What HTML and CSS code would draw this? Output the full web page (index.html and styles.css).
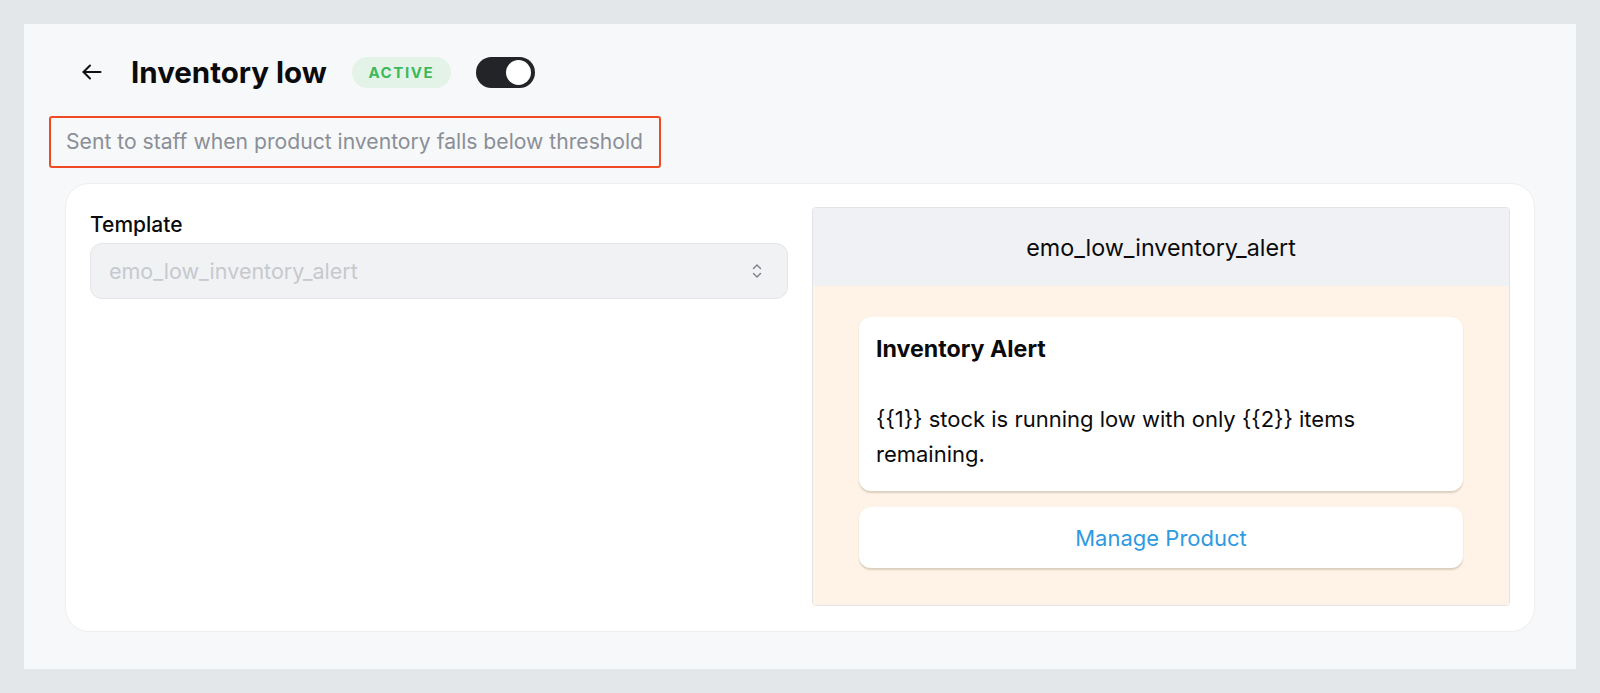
FILE: index.html
```html
<!DOCTYPE html>
<html lang="en">
<head>
<meta charset="utf-8">
<title>Inventory low</title>
<link rel="stylesheet" href="styles.css">
</head>
<body>
<div class="frame">
  <header class="header">
    <button class="back" aria-label="Back">
      <svg width="24" height="24" viewBox="0 0 24 24" fill="none" stroke="#111" stroke-width="2" stroke-linecap="round" stroke-linejoin="round"><path d="M20.5 12H3.5"/><path d="M10 5.5L3.5 12l6.5 6.5"/></svg>
    </button>
    <h1 class="title">Inventory low</h1>
    <span class="badge">ACTIVE</span>
    <span class="toggle"><span class="knob"></span></span>
  </header>
  <div class="subtitle-box">
    <p class="subtitle">Sent to staff when product inventory falls below threshold</p>
  </div>
  <main class="card">
    <section class="col-left">
      <label class="label">Template</label>
      <div class="select">
        <span class="select-text">emo_low_inventory_alert</span>
        <svg class="chev" width="12" height="18" viewBox="0 0 12 18" fill="none" stroke="#7b8088" stroke-width="1.4" stroke-linecap="round" stroke-linejoin="round"><path d="M2.5 6.5L6 3l3.5 3.5"/><path d="M2.5 11.5L6 15l3.5-3.5"/></svg>
      </div>
    </section>
    <section class="preview">
      <div class="preview-head">emo_low_inventory_alert</div>
      <div class="preview-body">
        <div class="bubble">
          <div class="bubble-title">Inventory Alert</div>
          <div class="bubble-text">{{1}} stock is running low with only {{2}} items remaining.</div>
        </div>
        <div class="action">Manage Product</div>
      </div>
    </section>
  </main>
</div>
</body>
</html>
```

FILE: styles.css
```css
* { box-sizing: border-box; }
html, body { margin: 0; padding: 0; }
body {
  background: #e4e7ea;
  padding: 24px;
  font-family: Inter, "Noto Sans", "Liberation Sans", sans-serif;
  color: #0b0b0c;
}
.frame {
  background: #f7f8fa;
  height: 645px;
  padding: 20px 41px 0 41px;
}
.header {
  display: flex;
  align-items: center;
  height: 56px;
}
.back {
  width: 24px;
  height: 24px;
  padding: 0;
  margin-left: 15px;
  border: 0;
  background: transparent;
  display: flex;
  align-items: center;
  justify-content: center;
}
.title {
  margin: 0 0 0 27px;
  font-size: 29.5px;
  font-weight: 700;
  letter-spacing: 0;
  line-height: 36px;
}
.badge {
  margin-left: 25px;
  height: 31px;
  width: 99px;
  border-radius: 16px;
  background: #e4f3e7;
  color: #3cba5b;
  font-size: 15px;
  font-weight: 700;
  letter-spacing: 1.6px;
  display: flex;
  align-items: center;
  justify-content: center;
}
.toggle {
  margin-left: 25px;
  width: 59px;
  height: 31px;
  border-radius: 16px;
  background: #222428;
  position: relative;
  display: block;
}
.knob {
  position: absolute;
  right: 4px;
  top: 3px;
  width: 25px;
  height: 25px;
  border-radius: 50%;
  background: #fff;
}
.subtitle-box {
  margin: 16px 0 0 -16px;
  width: 612px;
  height: 52px;
  border: 2px solid #f04a24;
  border-radius: 3px;
  padding: 0 0 0 15px;
  display: flex;
  align-items: center;
}
.subtitle {
  margin: 0;
  font-size: 21.15px;
  line-height: 28px;
  color: #8a8f97;
  white-space: nowrap;
}
.card {
  margin-top: 15px;
  height: 449px;
  background: #fff;
  border: 1px solid #eceef1;
  border-radius: 24px;
  padding: 23px 24px;
  display: grid;
  grid-template-columns: 1fr 1fr;
  gap: 24px;
}
.col-left {
  padding-top: 5px;
}
.label {
  display: block;
  font-size: 21px;
  line-height: 26px;
  font-weight: 500;
  color: #0b0b0c;
}
.select {
  margin-top: 5px;
  height: 56px;
  border-radius: 12px;
  background: #f1f2f4;
  border: 1px solid #e3e5e8;
  display: flex;
  align-items: center;
  justify-content: space-between;
  padding: 0 24px 0 18px;
}
.select-text {
  font-size: 21.5px;
  color: #c6c9ce;
}
.preview {
  border: 1px solid #e2e3e6;
  border-radius: 4px;
  overflow: hidden;
  display: flex;
  flex-direction: column;
  height: 399px;
}
.preview-head {
  height: 78px;
  flex: none;
  background: #f0f1f4;
  display: flex;
  align-items: center;
  justify-content: center;
  font-size: 23.3px;
  color: #0b0b0c;
}
.preview-body {
  flex: 1;
  background: #fef3e6;
  padding: 31px 46px 0 46px;
}
.bubble {
  background: #fff;
  border-radius: 12px;
  box-shadow: 0 1.5px 1.5px rgba(120, 100, 80, 0.25);
  padding: 15px 17px 19px 17px;
  font-size: 22px;
  line-height: 35px;
}
.bubble-title {
  font-weight: 700;
  font-size: 23.2px;
  margin-bottom: 35px;
}
.bubble-text {
  max-width: 545px;
}
.action {
  margin-top: 16px;
  height: 61px;
  background: #fff;
  border-radius: 12px;
  box-shadow: 0 1.5px 1.5px rgba(120, 100, 80, 0.25);
  display: flex;
  align-items: center;
  justify-content: center;
  font-size: 22px;
  color: #2e9ae0;
}
```
